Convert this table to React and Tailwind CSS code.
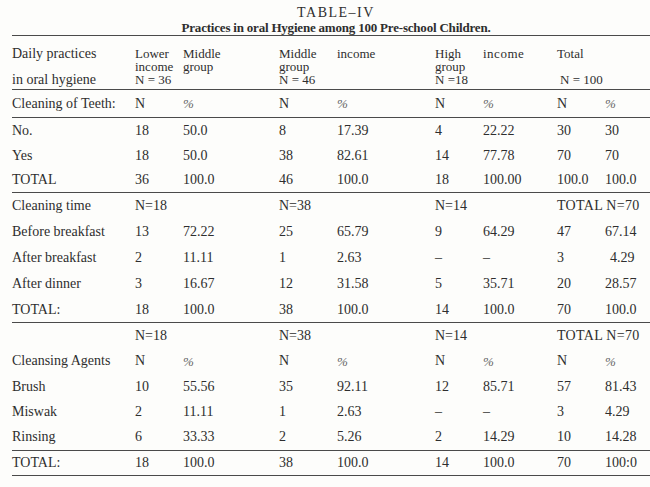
const grid = "grid grid-cols-[123px_48px_96px_58px_98px_48px_74px_48px_1fr] items-center";

const teeth = [
  ["No.", "18", "50.0", "8", "17.39", "4", "22.22", "30", "30"],
  ["Yes", "18", "50.0", "38", "82.61", "14", "77.78", "70", "70"],
  ["TOTAL", "36", "100.0", "46", "100.0", "18", "100.00", "100.0", "100.0"],
];

const times = [
  ["Before breakfast", "13", "72.22", "25", "65.79", "9", "64.29", "47", "67.14"],
  ["After breakfast", "2", "11.11", "1", "2.63", "–", "–", "3", " 4.29"],
  ["After dinner", "3", "16.67", "12", "31.58", "5", "35.71", "20", "28.57"],
  ["TOTAL:", "18", "100.0", "38", "100.0", "14", "100.0", "70", "100.0"],
];

const agents = [
  ["Brush", "10", "55.56", "35", "92.11", "12", "85.71", "57", "81.43"],
  ["Miswak", "2", "11.11", "1", "2.63", "–", "–", "3", "4.29"],
  ["Rinsing", "6", "33.33", "2", "5.26", "2", "14.29", "10", "14.28"],
];

const Cell = ({ v }) => {
  if (v === "%") return <span className="italic text-[13px] text-[#666]">%</span>;
  if (v.startsWith(" ")) return <span className="pl-[5px]">{v.trim()}</span>;
  return <span>{v}</span>;
};

// h is a full class name like "h-[26px]"
const Row = ({ cells, h = "h-[26px]", line }) => (
  <div className={`${grid} ${h} ${line ? "border-b-[1.5px] border-[#4a4a4a]" : ""}`}>
    {cells.map((v, i) => (
      <Cell key={i} v={v} />
    ))}
  </div>
);

const NRow = ({ label, h = "h-[26px]" }) => (
  <div className={`${grid} ${h}`}>
    <span>{label}</span>
    <span className="col-span-2">N=18</span>
    <span className="col-span-2">N=38</span>
    <span className="col-span-2">N=14</span>
    <span className="col-span-2 tracking-[0.3px]">TOTAL N=70</span>
  </div>
);

export default function App() {
  return (
    <div className="w-[650px] h-[487px] bg-[#fdfdfb] text-[#2e2e2e] font-['Liberation_Serif',serif] text-[14px] leading-none overflow-hidden">
      <div className="h-[35px] flex flex-col items-center pt-[6px] pl-[22px]">
        <div className="text-[14px] tracking-[1.5px] leading-[14px]">TABLE–IV</div>
        <div className="text-[13px] font-bold leading-[16px] tracking-[-0.2px]">
          Practices in oral Hygiene among 100 Pre-school Children.
        </div>
      </div>

      <div className="ml-[12px] border-t-[1.5px] border-[#4a4a4a]">
        <div className={`${grid} items-start h-[54px] pt-[11px] border-b-[1.5px] border-[#4a4a4a] text-[13px] leading-[13px]`}>
          <div className="flex flex-col text-[14px]">
            <span className="h-[26px]">Daily practices</span>
            <span>in oral hygiene</span>
          </div>
          <div className="flex flex-col">
            <span>Lower</span>
            <span>income</span>
            <span>N = 36</span>
          </div>
          <div className="flex flex-col">
            <span>Middle</span>
            <span>group</span>
          </div>
          <div className="flex flex-col">
            <span>Middle</span>
            <span>group</span>
            <span>N = 46</span>
          </div>
          <div>income</div>
          <div className="flex flex-col">
            <span>High</span>
            <span>group</span>
            <span>N =18</span>
          </div>
          <div className="tracking-[0.5px]">income</div>
          <div className="col-span-2 flex flex-col">
            <span className="h-[26px]">Total</span>
            <span className="pl-[3px]">N = 100</span>
          </div>
        </div>

        <Row cells={["Cleaning of Teeth:", "N", "%", "N", "%", "N", "%", "N", "%"]} h="h-[28px]" line />
        {teeth.map((r, i) => (
          <Row key={i} cells={r} h="h-[25px]" line={i === teeth.length - 1} />
        ))}

        <NRow label="Cleaning time" />
        {times.map((r, i) => (
          <Row key={i} cells={r} line={i === times.length - 1} />
        ))}

        <NRow label="" h="h-[25.5px]" />
        <Row cells={["Cleansing Agents", "N", "%", "N", "%", "N", "%", "N", "%"]} h="h-[25.5px]" />
        {agents.map((r, i) => (
          <Row key={i} cells={r} h="h-[25.5px]" line={i === agents.length - 1} />
        ))}

        <Row cells={["TOTAL:", "18", "100.0", "38", "100.0", "14", "100.0", "70", "100:0"]} h="h-[25.5px]" line />
      </div>
    </div>
  );
}
